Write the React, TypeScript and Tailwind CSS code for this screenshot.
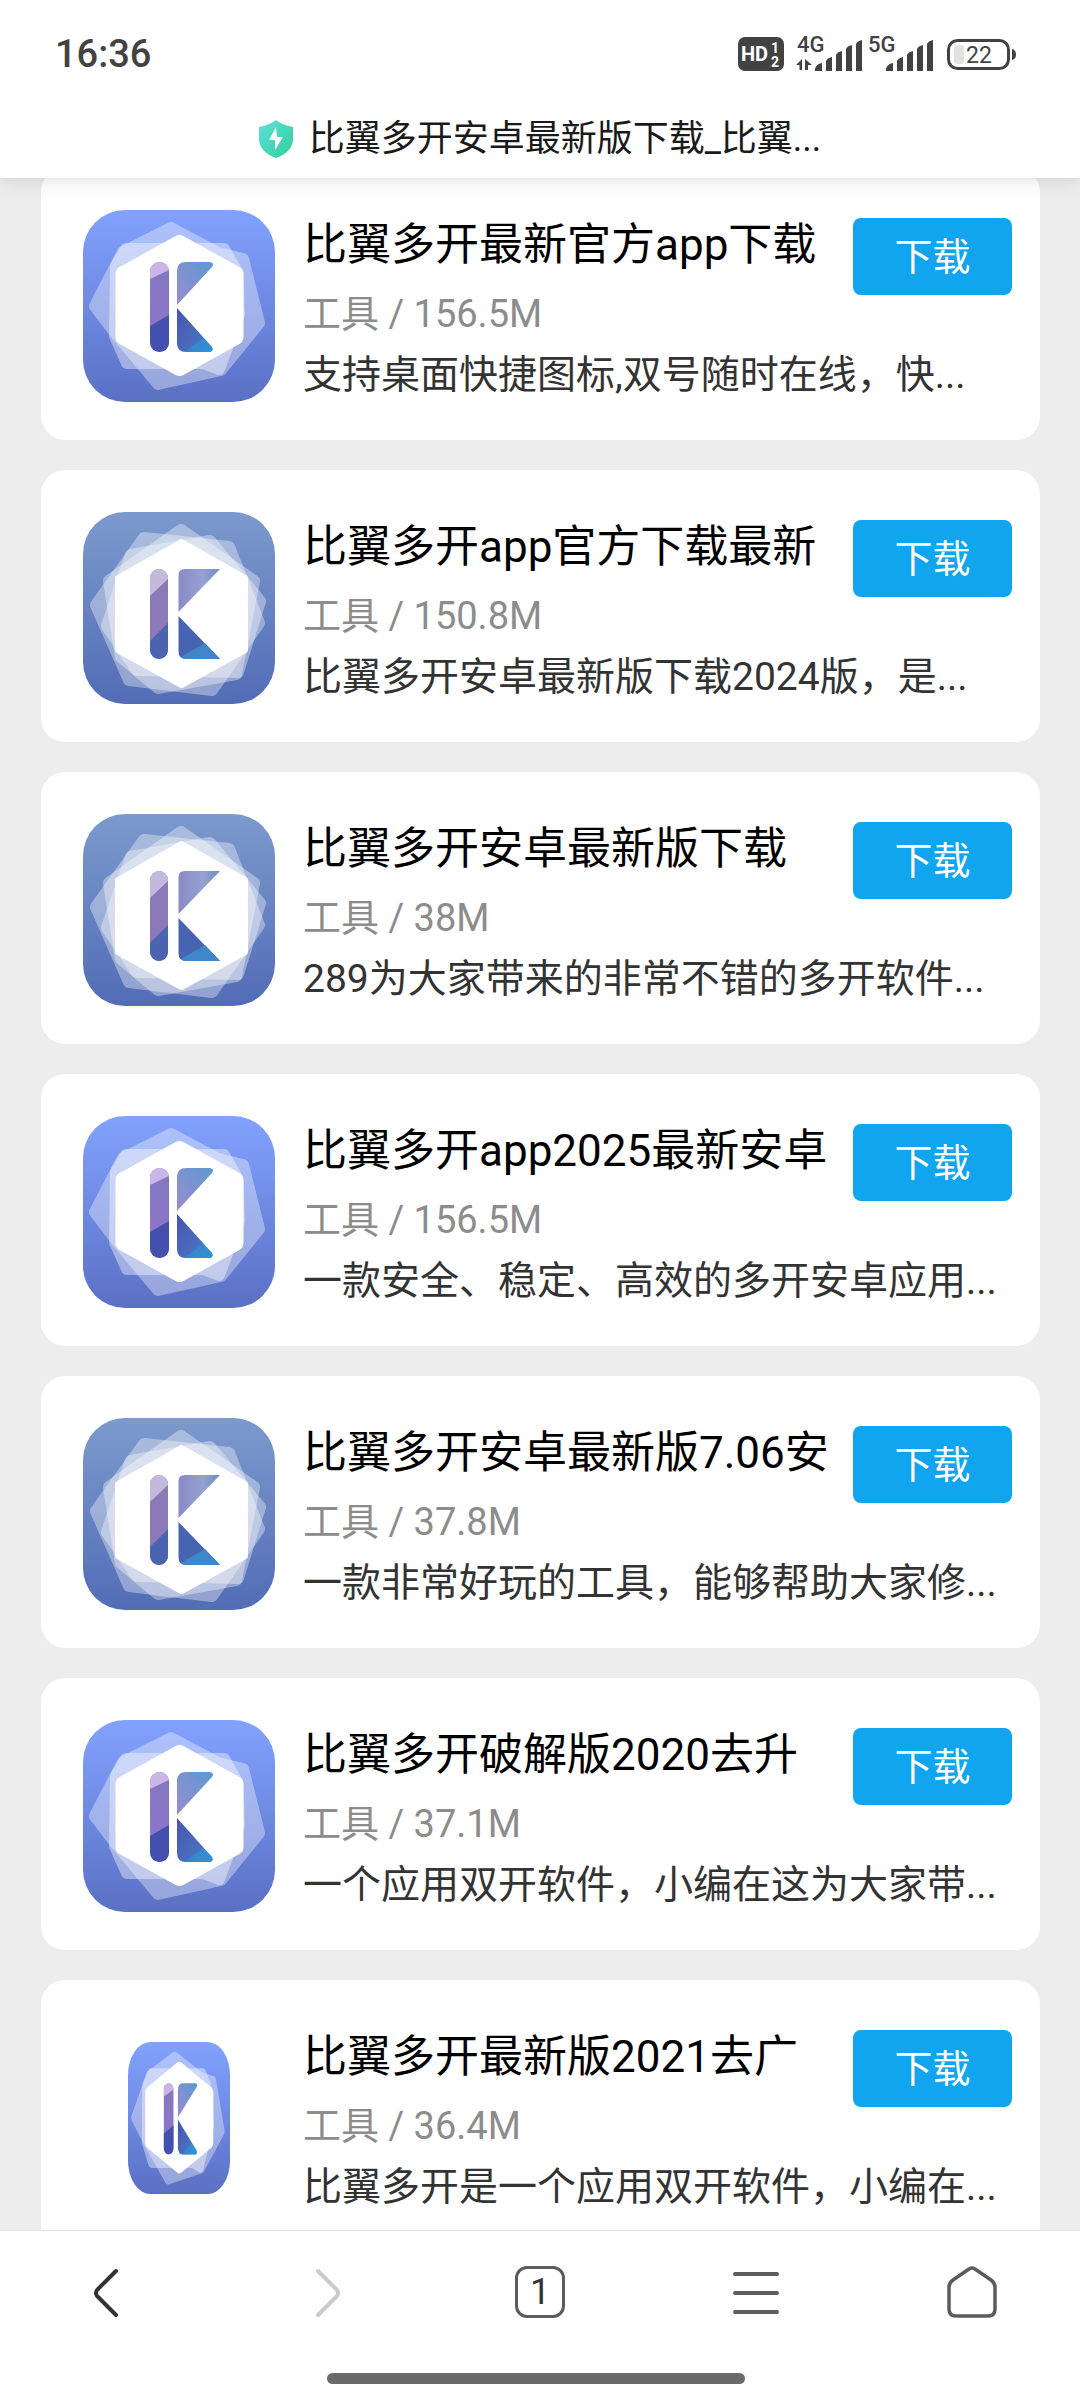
import { useId } from "react";

type LogoKind = "bright" | "muted" | "narrow";

interface AppItem {
  title: string;
  category: string;
  size: string;
  desc: string;
  logo: LogoKind;
}

const apps: AppItem[] = [
  {
    title: "比翼多开最新官方app下载",
    category: "工具",
    size: "156.5M",
    desc: "支持桌面快捷图标,双号随时在线，快...",
    logo: "bright",
  },
  {
    title: "比翼多开app官方下载最新",
    category: "工具",
    size: "150.8M",
    desc: "比翼多开安卓最新版下载2024版，是...",
    logo: "muted",
  },
  {
    title: "比翼多开安卓最新版下载",
    category: "工具",
    size: "38M",
    desc: "289为大家带来的非常不错的多开软件...",
    logo: "muted",
  },
  {
    title: "比翼多开app2025最新安卓",
    category: "工具",
    size: "156.5M",
    desc: "一款安全、稳定、高效的多开安卓应用...",
    logo: "bright",
  },
  {
    title: "比翼多开安卓最新版7.06安",
    category: "工具",
    size: "37.8M",
    desc: "一款非常好玩的工具，能够帮助大家修...",
    logo: "muted",
  },
  {
    title: "比翼多开破解版2020去升",
    category: "工具",
    size: "37.1M",
    desc: "一个应用双开软件，小编在这为大家带...",
    logo: "bright",
  },
  {
    title: "比翼多开最新版2021去广",
    category: "工具",
    size: "36.4M",
    desc: "比翼多开是一个应用双开软件，小编在...",
    logo: "narrow",
  },
];

function BrightLogo({ className }: { className: string }) {
  const id = useId();
  return (
    <svg viewBox="0 0 192 192" preserveAspectRatio="none" className={className} aria-hidden="true">
      <defs>
        <linearGradient id={`${id}bg`} x1="0" y1="0" x2="0" y2="1">
          <stop offset="0" stopColor="#82a2ff" />
          <stop offset="1" stopColor="#5a70c4" />
        </linearGradient>
        <linearGradient id={`${id}up`} x1="0" y1="1" x2="1" y2="0">
          <stop offset="0" stopColor="#9a8bd0" />
          <stop offset="1" stopColor="#5b9ad0" />
        </linearGradient>
        <linearGradient id={`${id}mid`} x1="0" y1="0" x2="0" y2="1">
          <stop offset="0" stopColor="#8279bf" />
          <stop offset="1" stopColor="#9273cf" />
        </linearGradient>
        <linearGradient id={`${id}low`} x1="0" y1="0" x2="1" y2="1">
          <stop offset="0" stopColor="#4654b4" />
          <stop offset="0.6" stopColor="#4a6cbc" />
          <stop offset="1" stopColor="#2f95d8" />
        </linearGradient>
        <clipPath id={`${id}bar`}>
          <rect x="67" y="52" width="19" height="90" rx="9.5" />
        </clipPath>
      </defs>
      <rect width="192" height="192" rx="42" fill={`url(#${id}bg)`} />
      <g fill="#fff" stroke="#fff" strokeWidth="12" strokeLinejoin="round">
        <path opacity=".36" d="M88 18 L135 43 L160 49 L176 113 L138 160 L75 174 L34 125 L12 96 L40 42 Z" />
        <path opacity=".4" d="M43 39 H141 L154 62 L156 105 L136 159 L120 153 H44 L32 126 L33 56 Z" />
        <path strokeWidth="16" d="M96.500 33 L152.500 64 V127 L96.500 158 L40.500 127 V64 Z" />
      </g>
      <g clipPath={`url(#${id}bar)`}>
        <rect x="67" y="52" width="19" height="90" fill={`url(#${id}mid)`} />
        <path d="M67 52 H86 V60 L67 69 Z" fill="#c9b5e8" />
        <path d="M67 116 L86 105 V142 H67 Z" fill="#4350ae" />
      </g>
      <path d="M94 61 Q94 52 103 52 H127 Q132 53 129 57 L94 95 Z" fill={`url(#${id}up)`} />
      <path d="M94 98 L129 137 Q131 141 127 142 H103 Q94 142 94 133 Z" fill={`url(#${id}low)`} />
      <path d="M101 142 L120 128 L129 137 Q131 141 127 142 Z" fill="#2f93d6" opacity=".6" />
    </svg>
  );
}

function MutedLogo({ className }: { className: string }) {
  const id = useId();
  return (
    <svg viewBox="0 0 192 192" className={className} aria-hidden="true">
      <defs>
        <linearGradient id={`${id}bg`} x1="0" y1="0" x2="0" y2="1">
          <stop offset="0" stopColor="#7c9acd" />
          <stop offset="1" stopColor="#526cb6" />
        </linearGradient>
        <linearGradient id={`${id}up`} x1="0" y1="0" x2="1" y2="0">
          <stop offset="0" stopColor="#8a89c6" />
          <stop offset="0.6" stopColor="#94a2d2" />
          <stop offset="1" stopColor="#6f8ac4" />
        </linearGradient>
        <clipPath id={`${id}bar`}>
          <rect x="67" y="57" width="18" height="90" rx="9" />
        </clipPath>
      </defs>
      <rect width="192" height="192" rx="42" fill={`url(#${id}bg)`} />
      <g fill="#fff" stroke="#fff" strokeWidth="12" strokeLinejoin="round">
        <path opacity=".36" d="M13 93 L61 26 L146 35 L176 111 L129 178 L46 168 Z" />
        <path opacity=".36" d="M98 18 L171 69 L153 162 L75 176 L38 145 L26 69 Z" />
        <path opacity=".36" d="M127 29 L177 89 L155 160 L54 158 L24 114 L48 43 Z" />
        <path strokeWidth="6" d="M98.500 30 L162 66 V138 L98.500 173 L35 138 V66 Z" />
      </g>
      <g clipPath={`url(#${id}bar)`}>
        <rect x="67" y="57" width="18" height="90" fill="#8c79b8" />
        <path d="M67 57 H85 V67 L67 84 Z" fill="#c3b9dc" />
        <path d="M67 129 L85 111 V147 H67 Z" fill="#4b64b1" />
      </g>
      <path d="M95.500 63 Q95.500 57 102 57 H137 L95.500 100 Z" fill={`url(#${id}up)`} />
      <path d="M95.500 104 L137 147 H103 Q95.500 147 95.500 139 Z" fill="#4963b3" />
      <path d="M98 145 L122 131 L137 147 H103 Q100 147 98 145 Z" fill="#3f86c9" />
    </svg>
  );
}

function AppLogo({ kind }: { kind: LogoKind }) {
  if (kind === "muted") return <MutedLogo className="size-48" />;
  if (kind === "narrow") return <BrightLogo className="h-[152px] w-[102px]" />;
  return <BrightLogo className="size-48" />;
}

function SignalBars({ label, data }: { label: string; data?: boolean }) {
  return (
    <svg viewBox="0 -12 68 60" className="h-[60px] w-[68px]" fill="#424242" aria-hidden="true">
      <text x="1" y="16" fontSize="22" fontWeight="500">
        {label}
      </text>
      {data && <path d="M0 29 L6 23 V34 H3.500 V29 Z M9 34 V23 L16 29 H12 V34 Z" />}
      <path d="M19 35 V33 Q20 28 26 27 V35 Z" />
      <path d="M30 35 V25 Q31 22 36 21 V35 Z" />
      <path d="M40 35 V19 Q41 16 46 15 V35 Z" />
      <path d="M50 35 V13 Q51 10 56 9 V35 Z" />
      <path d="M60 35 V8 Q61 5 66 4 V35 Z" />
    </svg>
  );
}

function StatusBar() {
  return (
    <div className="flex h-[108px] items-center justify-between pr-[63px] pl-[55px] text-[#424242]">
      <time className="text-[38px] leading-none font-medium">16:36</time>
      <div className="flex items-center">
        <svg viewBox="0 0 46 34" className="mr-3 h-[34px] w-[46px]" aria-hidden="true">
          <rect width="46" height="34" rx="7" fill="#424242" />
          <g fill="#fff" fontWeight="700">
            <text x="3" y="24" fontSize="20">
              HD
            </text>
            <text x="33" y="16" fontSize="14">
              1
            </text>
            <text x="33" y="30" fontSize="14">
              2
            </text>
          </g>
        </svg>
        <SignalBars label="4G" data />
        <span className="w-[3px]" />
        <SignalBars label="5G" />
        <svg viewBox="0 0 70 32" className="ml-3 h-8 w-[70px]" aria-hidden="true">
          <rect x="1.500" y="2.500" width="60" height="28" rx="9" fill="none" stroke="#424242" strokeWidth="3" />
          <rect x="7" y="7" width="10" height="19" rx="3" fill="#e2e2e2" />
          <path d="M65 11 Q69 12 69 16.500 Q69 21 65 22 Z" fill="#424242" />
          <text x="32" y="25" fontSize="23" textAnchor="middle" fill="#424242">
            22
          </text>
        </svg>
      </div>
    </div>
  );
}

function ShieldIcon() {
  const id = useId();
  return (
    <svg viewBox="0 0 34 38" className="h-[38px] w-[34px] shrink-0" aria-hidden="true">
      <defs>
        <linearGradient id={id} x1="0" y1="0" x2="1" y2="1">
          <stop offset="0" stopColor="#5fe0dc" />
          <stop offset="1" stopColor="#2fd09c" />
        </linearGradient>
      </defs>
      <path d="M17 0 Q23 5 34 7 V20 Q33 32 17 38 Q1 32 0 20 V7 Q11 5 17 0 Z" fill={`url(#${id})`} />
      <path d="M17 7 L10 20 H16 V30 L24 17 H18 Z" fill="#fff" />
    </svg>
  );
}

function AppCard({ app }: { app: AppItem }) {
  return (
    <li className="flex h-[272px] gap-7 rounded-3xl bg-white pt-[42px] pr-7 pl-[42px]">
      <div className="flex size-48 shrink-0 items-center justify-center">
        <AppLogo kind={app.logo} />
      </div>
      <div className="min-w-0 flex-1">
        <div className="flex justify-between">
          <div className="min-w-0">
            <h2 className="text-[44px] leading-[70px] whitespace-nowrap text-black">
              <a href="#">{app.title}</a>
            </h2>
            <p className="mt-1 text-[38px] leading-[60px] text-[#8c8c8c]">
              {app.category} / {app.size}
            </p>
          </div>
          <button
            type="button"
            className="mt-2 h-[77px] w-[159px] shrink-0 rounded-lg bg-[#10a5ee] text-[38px] leading-none text-white"
          >
            下载
          </button>
        </div>
        <p className="text-[39px] leading-[62px] whitespace-nowrap text-[#333]">{app.desc}</p>
      </div>
    </li>
  );
}

function BottomNav() {
  const item = "flex flex-1 items-center justify-center";
  const icon = "h-[52px] w-[50px]";
  return (
    <footer className="z-10 shrink-0 border-t border-[#e4e4e4] bg-white">
      <nav className="flex h-[122px]">
        <button type="button" aria-label="后退" className={item}>
          <svg viewBox="0 0 50 52" className={icon} fill="none" stroke="#333" strokeWidth="4" strokeLinecap="round">
            <path d="M33 5 L14 24 Q12 27 14 30 L33 49" />
          </svg>
        </button>
        <button type="button" aria-label="前进" className={item}>
          <svg viewBox="0 0 50 52" className={icon} fill="none" stroke="#cacaca" strokeWidth="4" strokeLinecap="round">
            <path d="M19 5 L38 24 Q40 27 38 30 L19 49" />
          </svg>
        </button>
        <button type="button" aria-label="标签页" className={item}>
          <span className="flex h-[52px] w-[50px] items-center justify-center rounded-xl border-3 border-[#5c5c5c] text-4xl leading-none text-[#333]">
            1
          </span>
        </button>
        <button type="button" aria-label="菜单" className={item}>
          <svg viewBox="0 0 50 52" className={icon} stroke="#5c5c5c" strokeWidth="4" strokeLinecap="round">
            <path d="M4 8 H46 M4 27 H46 M4 46 H46" />
          </svg>
        </button>
        <button type="button" aria-label="主页" className={item}>
          <svg viewBox="0 0 50 52" className={icon} fill="none" stroke="#5c5c5c" strokeWidth="3.5" strokeLinejoin="round">
            <path d="M22 3 Q25 1 28 3 L44 14 Q48 17 48 21 V43 Q48 50 41 50 H9 Q2 50 2 43 V21 Q2 17 6 14 Z" />
          </svg>
        </button>
      </nav>
      <div className="flex justify-center pt-5 pr-2 pb-4">
        <div className="h-[11px] w-[418px] rounded-full bg-[#6a6a6a]" />
      </div>
    </footer>
  );
}

export default function App() {
  return (
    <div className="flex h-screen flex-col bg-[#ededed] font-[Roboto,'Noto_Sans_CJK_SC',sans-serif]">
      <header className="z-10 shrink-0 bg-white shadow-[0_2px_20px_rgba(0,0,0,0.12)]">
        <StatusBar />
        <div className="flex h-[70px] items-center justify-center gap-4 pb-2">
          <ShieldIcon />
          <h1 className="truncate text-4xl leading-[60px] text-[#1a1a1a]">比翼多开安卓最新版下载_比翼...</h1>
        </div>
      </header>
      <main className="min-h-0 flex-1 overflow-hidden">
        <ul className="-mt-2.5 flex flex-col gap-[30px] pr-10 pl-[41px]">
          {apps.map((app) => (
            <AppCard key={app.title} app={app} />
          ))}
        </ul>
      </main>
      <BottomNav />
    </div>
  );
}
